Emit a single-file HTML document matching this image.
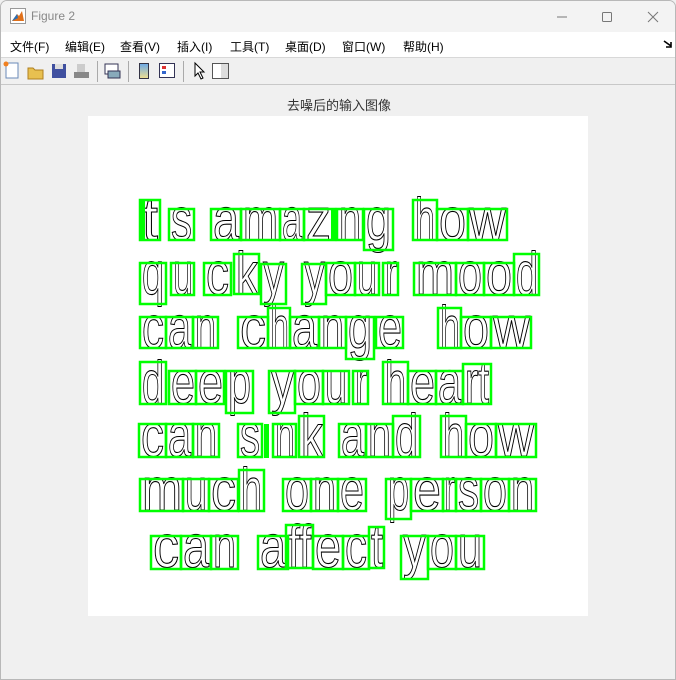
<!DOCTYPE html>
<html><head><meta charset="utf-8"><style>
*{margin:0;padding:0;box-sizing:border-box}
body{width:676px;height:680px;background:#f0f0f0;font-family:"Liberation Sans","Noto Sans CJK SC",sans-serif;position:relative;overflow:hidden}
.win{position:absolute;left:0;top:0;width:676px;height:680px;border:1px solid #b8b8b8;border-radius:7px 7px 0 0;overflow:hidden;background:#f0f0f0}
.title{position:absolute;left:0;top:0;width:676px;height:31px;background:#f3f3f3}
.title span{position:absolute;left:30px;top:8px;font-size:12px;color:#888}
.menu{position:absolute;left:0;top:31px;width:676px;height:26px;background:#fff;border-bottom:1px solid #d8d8d8}
.menu span{position:absolute;top:6px;font-size:12px;color:#000}
.tool{position:absolute;left:0;top:57px;width:676px;height:27px;background:#f0f0f0;border-bottom:1px solid #c8c8c8}
.cap{position:absolute;top:94px;left:0;width:676px;text-align:center;font-size:13px;color:#333}
.ax{position:absolute;left:87px;top:115px;width:500px;height:500px;background:#fff}
</style></head><body><div class="win">
<div class="title">
<svg style="position:absolute;left:9px;top:7px" width="16" height="16"><rect x="0.5" y="0.5" width="15" height="15" fill="#fff" stroke="#999"/><path d="M2 13 L7 6 L9 8 L12 3 L14 13 Z" fill="#e0701a"/><path d="M2 13 L7 6 L8 10 Z" fill="#2a6fb5"/></svg>
<span>Figure 2</span>
<svg style="position:absolute;left:550px;top:8px" width="120" height="16"><line x1="6" y1="8" x2="16" y2="8" stroke="#777"/><rect x="51.5" y="3.5" width="9" height="9" fill="none" stroke="#777" rx="1"/><path d="M97 3 L107 13 M107 3 L97 13" stroke="#777"/></svg>
</div>
<div class="menu">
<span style="left:9px">文件(F)</span><span style="left:64px">编辑(E)</span><span style="left:119px">查看(V)</span><span style="left:176px">插入(I)</span><span style="left:229px">工具(T)</span><span style="left:284px">桌面(D)</span><span style="left:341px">窗口(W)</span><span style="left:402px">帮助(H)</span>
<svg style="position:absolute;left:662px;top:8px" width="10" height="8"><path d="M1 1 L8 6 M8 2 L8 7 L3 7" stroke="#000" stroke-width="1.6" fill="none"/></svg>
</div>
<div class="tool">
<svg width="240" height="27">
<rect x="5" y="5" width="12" height="15" fill="#fff" stroke="#6a8ab8"/><circle cx="5" cy="6" r="2.5" fill="#f08020"/>
<path d="M27 10 h5 l2 2 h8 v9 h-15z" fill="#e8c050" stroke="#b08020"/>
<rect x="51" y="6" width="14" height="14" fill="#4050a0"/><rect x="54" y="6" width="8" height="5" fill="#ddd"/>
<path d="M73 14 h15 v6 h-15z" fill="#888"/><rect x="76" y="6" width="8" height="8" fill="#ccc"/>
<line x1="96.5" y1="3" x2="96.5" y2="24" stroke="#aaa"/>
<rect x="104" y="6" width="13" height="10" fill="#fff" stroke="#335" /><rect x="107" y="13" width="12" height="7" fill="#8ab" stroke="#335"/>
<line x1="127.5" y1="3" x2="127.5" y2="24" stroke="#aaa"/>
<defs><linearGradient id="g" x1="0" y1="0" x2="0" y2="1"><stop offset="0" stop-color="#6aa8e8"/><stop offset="1" stop-color="#f0e090"/></linearGradient></defs>
<rect x="138.5" y="5.5" width="9" height="15" fill="url(#g)" stroke="#334"/>
<rect x="158.5" y="5.5" width="15" height="14" fill="#fff" stroke="#335"/><rect x="161" y="8" width="4" height="3" fill="#d33"/><rect x="161" y="13" width="4" height="3" fill="#36c"/>
<line x1="182.5" y1="3" x2="182.5" y2="24" stroke="#aaa"/>
<path d="M194 5 L194 18 L197 15 L200 21 L202 20 L199 14 L203 14 Z" fill="#fff" stroke="#000"/>
<rect x="211.5" y="5.5" width="16" height="15" fill="#fff" stroke="#555"/><rect x="220" y="6" width="7" height="14" fill="#ddd"/>
</svg>
</div>
<div class="cap">去噪后的输入图像</div>
<div class="ax"></div>
<svg style="position:absolute;left:0;top:0" width="676" height="680">
<g font-family="Liberation Sans, sans-serif" font-size="60" fill="none" stroke="#000" stroke-width="1.1" text-anchor="start">
<text x="141" y="239" textLength="16" lengthAdjust="spacingAndGlyphs">t</text>
<text x="170" y="239" textLength="21" lengthAdjust="spacingAndGlyphs">s</text>
<text x="212" y="239" textLength="26" lengthAdjust="spacingAndGlyphs">a</text>
<text x="242" y="239" textLength="35" lengthAdjust="spacingAndGlyphs">m</text>
<text x="281" y="239" textLength="20" lengthAdjust="spacingAndGlyphs">a</text>
<text x="305" y="239" textLength="25" lengthAdjust="spacingAndGlyphs">z</text>
<text x="338" y="239" textLength="22" lengthAdjust="spacingAndGlyphs">n</text>
<text x="365" y="239" textLength="25" lengthAdjust="spacingAndGlyphs">g</text>
<text x="414" y="239" textLength="20" lengthAdjust="spacingAndGlyphs">h</text>
<text x="438" y="239" textLength="27" lengthAdjust="spacingAndGlyphs">o</text>
<text x="468" y="239" textLength="37" lengthAdjust="spacingAndGlyphs">w</text>

<text x="141" y="293" textLength="22" lengthAdjust="spacingAndGlyphs">q</text>
<text x="172" y="293" textLength="20" lengthAdjust="spacingAndGlyphs">u</text>
<text x="205" y="293" textLength="23" lengthAdjust="spacingAndGlyphs">c</text>
<text x="235" y="293" textLength="22" lengthAdjust="spacingAndGlyphs">k</text>
<text x="262" y="293" textLength="21" lengthAdjust="spacingAndGlyphs">y</text>
<text x="303" y="293" textLength="21" lengthAdjust="spacingAndGlyphs">y</text>
<text x="327" y="293" textLength="25" lengthAdjust="spacingAndGlyphs">o</text>
<text x="356" y="293" textLength="20" lengthAdjust="spacingAndGlyphs">u</text>
<text x="384" y="293" textLength="12" lengthAdjust="spacingAndGlyphs">r</text>
<text x="415" y="293" textLength="38" lengthAdjust="spacingAndGlyphs">m</text>
<text x="457" y="293" textLength="24" lengthAdjust="spacingAndGlyphs">o</text>
<text x="485" y="293" textLength="26" lengthAdjust="spacingAndGlyphs">o</text>
<text x="515" y="293" textLength="22" lengthAdjust="spacingAndGlyphs">d</text>

<text x="141" y="347" textLength="22" lengthAdjust="spacingAndGlyphs">c</text>
<text x="167" y="347" textLength="23" lengthAdjust="spacingAndGlyphs">a</text>
<text x="194" y="347" textLength="21" lengthAdjust="spacingAndGlyphs">n</text>
<text x="239" y="347" textLength="26" lengthAdjust="spacingAndGlyphs">c</text>
<text x="269" y="347" textLength="19" lengthAdjust="spacingAndGlyphs">h</text>
<text x="291" y="347" textLength="25" lengthAdjust="spacingAndGlyphs">a</text>
<text x="320" y="347" textLength="23" lengthAdjust="spacingAndGlyphs">n</text>
<text x="347" y="347" textLength="24" lengthAdjust="spacingAndGlyphs">g</text>
<text x="377" y="347" textLength="24" lengthAdjust="spacingAndGlyphs">e</text>
<text x="439" y="347" textLength="20" lengthAdjust="spacingAndGlyphs">h</text>
<text x="462" y="347" textLength="26" lengthAdjust="spacingAndGlyphs">o</text>
<text x="492" y="347" textLength="37" lengthAdjust="spacingAndGlyphs">w</text>

<text x="141" y="402" textLength="22" lengthAdjust="spacingAndGlyphs">d</text>
<text x="170" y="402" textLength="24" lengthAdjust="spacingAndGlyphs">e</text>
<text x="197" y="402" textLength="25" lengthAdjust="spacingAndGlyphs">e</text>
<text x="227" y="402" textLength="23" lengthAdjust="spacingAndGlyphs">p</text>
<text x="270" y="402" textLength="23" lengthAdjust="spacingAndGlyphs">y</text>
<text x="296" y="402" textLength="24" lengthAdjust="spacingAndGlyphs">o</text>
<text x="324" y="402" textLength="22" lengthAdjust="spacingAndGlyphs">u</text>
<text x="354" y="402" textLength="12" lengthAdjust="spacingAndGlyphs">r</text>
<text x="384" y="402" textLength="21" lengthAdjust="spacingAndGlyphs">h</text>
<text x="409" y="402" textLength="25" lengthAdjust="spacingAndGlyphs">e</text>
<text x="437" y="402" textLength="23" lengthAdjust="spacingAndGlyphs">a</text>
<text x="464" y="402" textLength="24" lengthAdjust="spacingAndGlyphs">rt</text>

<text x="140" y="455" textLength="23" lengthAdjust="spacingAndGlyphs">c</text>
<text x="167" y="455" textLength="23" lengthAdjust="spacingAndGlyphs">a</text>
<text x="194" y="455" textLength="22" lengthAdjust="spacingAndGlyphs">n</text>
<text x="239" y="455" textLength="20" lengthAdjust="spacingAndGlyphs">s</text>
<text x="274" y="455" textLength="20" lengthAdjust="spacingAndGlyphs">n</text>
<text x="300" y="455" textLength="22" lengthAdjust="spacingAndGlyphs">k</text>
<text x="340" y="455" textLength="23" lengthAdjust="spacingAndGlyphs">a</text>
<text x="367" y="455" textLength="23" lengthAdjust="spacingAndGlyphs">n</text>
<text x="394" y="455" textLength="23" lengthAdjust="spacingAndGlyphs">d</text>
<text x="442" y="455" textLength="21" lengthAdjust="spacingAndGlyphs">h</text>
<text x="467" y="455" textLength="26" lengthAdjust="spacingAndGlyphs">o</text>
<text x="497" y="455" textLength="36" lengthAdjust="spacingAndGlyphs">w</text>

<text x="141" y="509" textLength="40" lengthAdjust="spacingAndGlyphs">m</text>
<text x="184" y="509" textLength="22" lengthAdjust="spacingAndGlyphs">u</text>
<text x="210" y="509" textLength="25" lengthAdjust="spacingAndGlyphs">c</text>
<text x="240" y="509" textLength="21" lengthAdjust="spacingAndGlyphs">h</text>
<text x="284" y="509" textLength="24" lengthAdjust="spacingAndGlyphs">o</text>
<text x="312" y="509" textLength="23" lengthAdjust="spacingAndGlyphs">n</text>
<text x="339" y="509" textLength="24" lengthAdjust="spacingAndGlyphs">e</text>
<text x="387" y="509" textLength="21" lengthAdjust="spacingAndGlyphs">p</text>
<text x="412" y="509" textLength="28" lengthAdjust="spacingAndGlyphs">e</text>
<text x="443" y="509" textLength="11" lengthAdjust="spacingAndGlyphs">r</text>
<text x="457" y="509" textLength="21" lengthAdjust="spacingAndGlyphs">s</text>
<text x="482" y="509" textLength="24" lengthAdjust="spacingAndGlyphs">o</text>
<text x="510" y="509" textLength="23" lengthAdjust="spacingAndGlyphs">n</text>

<text x="152" y="566" textLength="26" lengthAdjust="spacingAndGlyphs">c</text>
<text x="182" y="566" textLength="26" lengthAdjust="spacingAndGlyphs">a</text>
<text x="212" y="566" textLength="23" lengthAdjust="spacingAndGlyphs">n</text>
<text x="259" y="566" textLength="26" lengthAdjust="spacingAndGlyphs">a</text>
<text x="287" y="566" textLength="23" lengthAdjust="spacingAndGlyphs">ff</text>
<text x="314" y="566" textLength="26" lengthAdjust="spacingAndGlyphs">e</text>
<text x="344" y="566" textLength="22" lengthAdjust="spacingAndGlyphs">c</text>
<text x="370" y="566" textLength="12" lengthAdjust="spacingAndGlyphs">t</text>
<text x="402" y="566" textLength="23" lengthAdjust="spacingAndGlyphs">y</text>
<text x="429" y="566" textLength="24" lengthAdjust="spacingAndGlyphs">o</text>
<text x="457" y="566" textLength="24" lengthAdjust="spacingAndGlyphs">u</text>
</g>
<g fill="none" stroke="#00ff00" stroke-width="2.5">
<rect x="139" y="199" width="20" height="40"/><rect x="168" y="208" width="25" height="31"/><rect x="210" y="208" width="30" height="31"/><rect x="240" y="208" width="39" height="31"/><rect x="279" y="208" width="24" height="31"/><rect x="303" y="208" width="31" height="31"/><rect x="336" y="208" width="26" height="31"/><rect x="363" y="208" width="29" height="41"/><rect x="412" y="199" width="24" height="40"/><rect x="436" y="208" width="31" height="31"/><rect x="467" y="208" width="39" height="31"/>
<rect x="139" y="262" width="26" height="41"/><rect x="170" y="262" width="23" height="32"/><rect x="203" y="262" width="27" height="32"/><rect x="233" y="253" width="25" height="40"/><rect x="260" y="263" width="25" height="40"/><rect x="301" y="263" width="24" height="40"/><rect x="325" y="262" width="29" height="32"/><rect x="354" y="262" width="24" height="32"/><rect x="382" y="262" width="15" height="32"/><rect x="413" y="262" width="42" height="32"/><rect x="455" y="262" width="28" height="32"/><rect x="483" y="262" width="30" height="32"/><rect x="513" y="253" width="25" height="41"/>
<rect x="139" y="316" width="26" height="31"/><rect x="165" y="316" width="27" height="31"/><rect x="192" y="316" width="25" height="31"/><rect x="237" y="316" width="30" height="31"/><rect x="267" y="307" width="22" height="40"/><rect x="289" y="316" width="29" height="31"/><rect x="318" y="316" width="27" height="31"/><rect x="345" y="316" width="28" height="42"/><rect x="375" y="316" width="27" height="31"/><rect x="437" y="307" width="23" height="40"/><rect x="460" y="316" width="30" height="31"/><rect x="490" y="316" width="40" height="31"/>
<rect x="139" y="361" width="26" height="42"/><rect x="168" y="370" width="27" height="33"/><rect x="195" y="370" width="28" height="33"/><rect x="225" y="370" width="27" height="42"/><rect x="268" y="370" width="26" height="42"/><rect x="294" y="370" width="28" height="33"/><rect x="322" y="370" width="26" height="33"/><rect x="352" y="370" width="15" height="33"/><rect x="382" y="361" width="25" height="42"/><rect x="407" y="370" width="28" height="33"/><rect x="435" y="370" width="27" height="33"/><rect x="462" y="363" width="28" height="40"/>
<rect x="138" y="423" width="27" height="33"/><rect x="165" y="423" width="27" height="33"/><rect x="192" y="423" width="26" height="33"/><rect x="237" y="423" width="24" height="33"/><rect x="272" y="423" width="23" height="33"/><rect x="298" y="415" width="25" height="41"/><rect x="338" y="423" width="27" height="33"/><rect x="365" y="423" width="27" height="33"/><rect x="392" y="415" width="27" height="41"/><rect x="440" y="415" width="25" height="41"/><rect x="465" y="423" width="30" height="33"/><rect x="495" y="423" width="40" height="33"/>
<rect x="139" y="478" width="43" height="32"/><rect x="182" y="478" width="26" height="32"/><rect x="208" y="478" width="29" height="32"/><rect x="238" y="469" width="25" height="41"/><rect x="282" y="478" width="28" height="32"/><rect x="310" y="478" width="27" height="32"/><rect x="337" y="478" width="28" height="32"/><rect x="385" y="478" width="25" height="40"/><rect x="410" y="478" width="32" height="32"/><rect x="442" y="478" width="13" height="32"/><rect x="455" y="478" width="25" height="32"/><rect x="480" y="478" width="28" height="32"/><rect x="508" y="478" width="27" height="32"/>
<rect x="150" y="535" width="30" height="33"/><rect x="180" y="535" width="30" height="33"/><rect x="210" y="535" width="27" height="33"/><rect x="257" y="535" width="30" height="33"/><rect x="285" y="524" width="27" height="43"/><rect x="312" y="535" width="30" height="33"/><rect x="342" y="535" width="26" height="33"/><rect x="368" y="526" width="15" height="41"/><rect x="400" y="535" width="27" height="43"/><rect x="427" y="535" width="28" height="33"/><rect x="455" y="535" width="28" height="33"/>
</g>
<g fill="#00ff00">
<rect x="139" y="199" width="5" height="40"/><rect x="330" y="208" width="5" height="31"/><rect x="263" y="423" width="5" height="34"/>
</g>
</svg>
</div></body></html>
